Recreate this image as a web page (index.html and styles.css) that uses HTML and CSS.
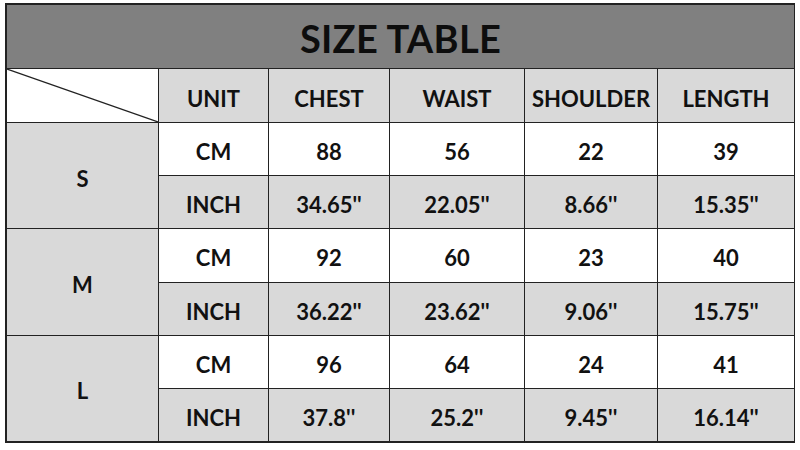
FILE: index.html
```html
<!DOCTYPE html>
<html>
<head>
<meta charset="utf-8">
<link rel="stylesheet" href="styles.css">
</head>
<body>
<div class="table">
  <div class="cell title">SIZE TABLE</div>
  <div class="cell corner"><svg class="diag" viewBox="0 0 100 100" preserveAspectRatio="none"><line x1="0" y1="0" x2="100" y2="100" stroke="#222" stroke-width="1.2" vector-effect="non-scaling-stroke"/></svg></div>
  <div class="cell head">UNIT</div>
  <div class="cell head">CHEST</div>
  <div class="cell head">WAIST</div>
  <div class="cell head">SHOULDER</div>
  <div class="cell head">LENGTH</div>

  <div class="cell size">S</div>
  <div class="cell w">CM</div><div class="cell w">88</div><div class="cell w">56</div><div class="cell w">22</div><div class="cell w">39</div>
  <div class="cell g">INCH</div><div class="cell g">34.65''</div><div class="cell g">22.05''</div><div class="cell g">8.66''</div><div class="cell g">15.35''</div>

  <div class="cell size">M</div>
  <div class="cell w">CM</div><div class="cell w">92</div><div class="cell w">60</div><div class="cell w">23</div><div class="cell w">40</div>
  <div class="cell g">INCH</div><div class="cell g">36.22''</div><div class="cell g">23.62''</div><div class="cell g">9.06''</div><div class="cell g">15.75''</div>

  <div class="cell size">L</div>
  <div class="cell w">CM</div><div class="cell w">96</div><div class="cell w">64</div><div class="cell w">24</div><div class="cell w">41</div>
  <div class="cell g">INCH</div><div class="cell g">37.8''</div><div class="cell g">25.2''</div><div class="cell g">9.45''</div><div class="cell g">16.14''</div>
</div>
</body>
</html>
```
FILE: styles.css
```css
html, body {
  margin: 0;
  padding: 0;
  background: #fff;
}
body {
  padding: 3px 5px 0 5px;
  font-family: Lato, "Open Sans", sans-serif;
}
.table {
  box-sizing: border-box;
  width: 790px;
  height: 440px;
  border: 2px solid #222;
  background: #222;
  display: grid;
  grid-template-columns: 151px 109px 120px 134px 132px 136px;
  grid-template-rows: 63px 53px repeat(6, 1fr);
  gap: 1px;
}
.cell {
  box-sizing: border-box;
  display: flex;
  align-items: center;
  justify-content: center;
  padding-top: 5px;
  font-size: 22px;
  font-weight: 700;
  color: #111;
  background: #fff;
  position: relative;
}
.title {
  grid-column: 1 / span 6;
  background: #808080;
  font-size: 38px;
  padding-top: 3px;
  color: #0d0d0d;
  letter-spacing: 0.3px;
}
.corner {
  background: #fff;
}
.diag {
  position: absolute;
  left: 0;
  top: 0;
  width: 100%;
  height: 100%;
}
.head { background: #d9d9d9; }
.size {
  grid-row: span 2;
  background: #d9d9d9;
}
.w { background: #fff; }
.g { background: #d9d9d9; }
```
